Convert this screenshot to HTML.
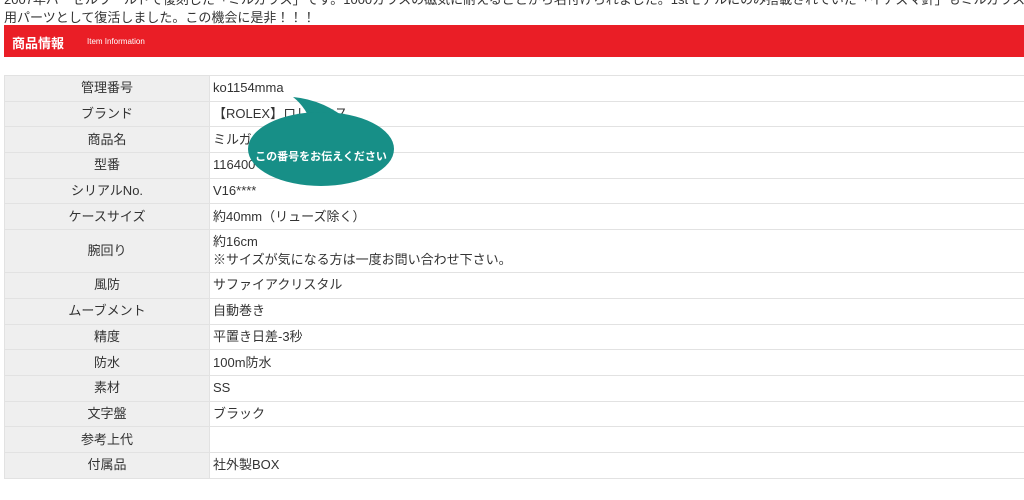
<!DOCTYPE html>
<html><head><meta charset="utf-8"><style>
body{margin:0;width:1024px;height:500px;overflow:hidden;background:#fff;font-family:"Liberation Sans","Noto Sans CJK JP",sans-serif;color:#333;position:relative}
.intro{position:absolute;left:4px;top:-9px;font-size:13px;line-height:18px;white-space:nowrap;color:#333}
.bar{position:absolute;left:4px;top:25px;width:1030px;height:32px;background:#ea1e26}
.bar b{position:absolute;left:8px;top:8px;color:#fff;font-size:13px}
.bar span{position:absolute;left:83px;top:12px;color:#fff;font-size:8px}
table{position:absolute;left:4px;top:75px;border-collapse:collapse;width:1030px;font-size:13px}
td{border:1px solid #e2e2e2;height:24.7px;padding:0 0 0 3px;line-height:18px}
td.l{width:204px;background:#efefef;text-align:center;padding:0}
.bub{position:absolute;left:0;top:0}
</style></head><body>
<div class="intro">2007年バーゼルワールドで復刻した「ミルガウス」です。1000ガウスの磁気に耐えることから名付けられました。1stモデルにのみ搭載されていた「イナズマ針」もミルガウス専<br>用パーツとして復活しました。この機会に是非！！！</div>
<div class="bar"><b>商品情報</b><span>Item Information</span></div>
<table>
<tr><td class="l">管理番号</td><td>ko1154mma</td></tr>
<tr><td class="l">ブランド</td><td>【ROLEX】ロレックス</td></tr>
<tr><td class="l">商品名</td><td>ミルガウス</td></tr>
<tr><td class="l">型番</td><td>116400</td></tr>
<tr><td class="l">シリアルNo.</td><td>V16****</td></tr>
<tr><td class="l">ケースサイズ</td><td>約40mm（リューズ除く）</td></tr>
<tr><td class="l" style="height:42px">腕回り</td><td>約16cm<br>※サイズが気になる方は一度お問い合わせ下さい。</td></tr>
<tr><td class="l">風防</td><td>サファイアクリスタル</td></tr>
<tr><td class="l">ムーブメント</td><td>自動巻き</td></tr>
<tr><td class="l">精度</td><td>平置き日差-3秒</td></tr>
<tr><td class="l">防水</td><td>100m防水</td></tr>
<tr><td class="l">素材</td><td>SS</td></tr>
<tr><td class="l">文字盤</td><td>ブラック</td></tr>
<tr><td class="l">参考上代</td><td></td></tr>
<tr><td class="l">付属品</td><td>社外製BOX</td></tr>
</table>
<svg class="bub" width="1024" height="500">
<path d="M293 97 Q325 100 350 122 L312 126 Q307 108 293 97 Z" fill="#178f87"/>
<ellipse cx="321" cy="149" rx="73" ry="37" fill="#178f87"/>
<text x="321" y="160" fill="#fff" font-size="11" font-weight="bold" text-anchor="middle" font-family="Liberation Sans, Noto Sans CJK JP, sans-serif">この番号をお伝えください</text>
</svg>
</body></html>
